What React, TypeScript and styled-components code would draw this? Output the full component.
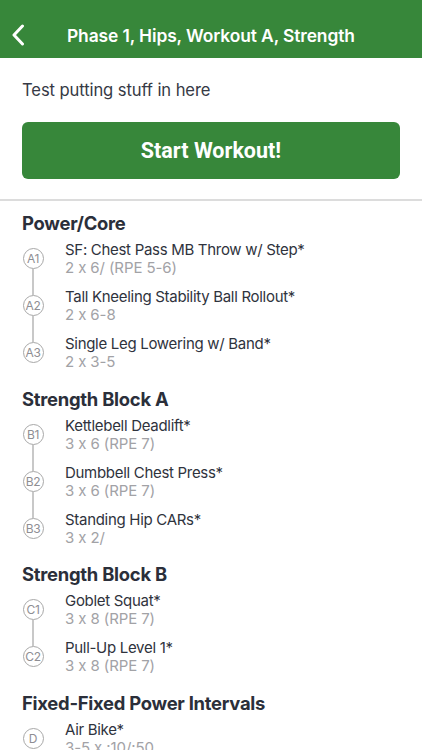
import React from "react";
import styled, { createGlobalStyle } from "styled-components";

const Global = createGlobalStyle`
  html, body { margin: 0; padding: 0; background: #ffffff; }
  body { font-family: Inter, "Noto Sans", sans-serif; -webkit-font-smoothing: antialiased; }
  * { box-sizing: border-box; }
`;

const Page = styled.div`
  width: 422px;
  height: 750px;
  overflow: hidden;
  background: #ffffff;
`;

const Header = styled.header`
  height: 58px;
  background: #37873a;
  display: flex;
  align-items: center;
  padding: 12px 0 0 8px;
  color: #ffffff;
`;

const BackButton = styled.div`
  width: 20px;
  height: 24px;
  display: flex;
  align-items: center;
  justify-content: center;
  margin-right: 39px;
`;

const Title = styled.h1`
  margin: 0;
  font-size: 17.4px;
  font-weight: 600;
  letter-spacing: -0.1px;
  color: #ffffff;
`;

const Intro = styled.p`
  margin: 0;
  padding: 22px 22px 0;
  font-size: 16.6px;
  line-height: 20px;
  color: #363a45;
  letter-spacing: -0.1px;
`;

const StartButton = styled.button`
  display: flex;
  align-items: center;
  justify-content: center;
  margin: 22px 22px 0;
  width: 378px;
  height: 57px;
  border: none;
  border-radius: 6px;
  background: #37873a;
  color: #ffffff;
  font-family: Roboto, "Liberation Sans", sans-serif;
  font-weight: 700;
  font-size: 21.5px;
`;

const Divider = styled.hr`
  margin: 20px 0 0;
  border: none;
  height: 1.5px;
  background: #dcdcdc;
`;

const Section = styled.section`
  padding: 0 22px;
`;

const SectionTitle = styled.h2`
  margin: 10.5px 0 0;
  font-size: 18.4px;
  line-height: 24px;
  font-weight: 700;
  color: #2b2f3a;
  letter-spacing: -0.25px;
`;

const Row = styled.div`
  display: flex;
  height: 47px;
`;

const Rail = styled.div`
  width: 22px;
  display: flex;
  flex-direction: column;
  align-items: center;
  margin-right: 21px;
`;

const Segment = styled.div<{ $show: boolean }>`
  flex: 1;
  width: 1.5px;
  background: ${(p) => (p.$show ? "#c8c8c8" : "transparent")};
`;

const Badge = styled.div`
  width: 21px;
  height: 21px;
  border-radius: 50%;
  border: 1px solid #a8a8a8;
  display: flex;
  align-items: center;
  justify-content: center;
  font-size: 12px;
  color: #8e8e93;
  letter-spacing: -0.4px;
  flex: none;
`;

const Info = styled.div`
  display: flex;
  flex-direction: column;
  justify-content: center;
`;

const Name = styled.div`
  font-size: 15px;
  line-height: 19px;
  color: #2f333d;
  letter-spacing: -0.3px;
`;

const Sets = styled.div`
  font-size: 15px;
  line-height: 18px;
  color: #a2a2a6;
  letter-spacing: -0.1px;
`;

type Item = { code: string; name: string; sets: string };
type Block = { title: string; items: Item[] };

const blocks: Block[] = [
  {
    title: "Power/Core",
    items: [
      { code: "A1", name: "SF: Chest Pass MB Throw w/ Step*", sets: "2 x 6/ (RPE 5-6)" },
      { code: "A2", name: "Tall Kneeling Stability Ball Rollout*", sets: "2 x 6-8" },
      { code: "A3", name: "Single Leg Lowering w/ Band*", sets: "2 x 3-5" },
    ],
  },
  {
    title: "Strength Block A",
    items: [
      { code: "B1", name: "Kettlebell Deadlift*", sets: "3 x 6 (RPE 7)" },
      { code: "B2", name: "Dumbbell Chest Press*", sets: "3 x 6 (RPE 7)" },
      { code: "B3", name: "Standing Hip CARs*", sets: "3 x 2/" },
    ],
  },
  {
    title: "Strength Block B",
    items: [
      { code: "C1", name: "Goblet Squat*", sets: "3 x 8 (RPE 7)" },
      { code: "C2", name: "Pull-Up Level 1*", sets: "3 x 8 (RPE 7)" },
    ],
  },
  {
    title: "Fixed-Fixed Power Intervals",
    items: [{ code: "D", name: "Air Bike*", sets: "3-5 x :10/:50" }],
  },
];

export default function App() {
  return (
    <Page>
      <Global />
      <Header>
        <BackButton>
          <svg width="14" height="22" viewBox="0 0 14 22" fill="none">
            <path d="M11.5 2 L3 11 L11.5 20" stroke="#ffffff" strokeWidth="3" strokeLinecap="round" strokeLinejoin="round" />
          </svg>
        </BackButton>
        <Title>Phase 1, Hips, Workout A, Strength</Title>
      </Header>
      <Intro>Test putting stuff in here</Intro>
      <StartButton>Start Workout!</StartButton>
      <Divider />
      {blocks.map((b) => (
        <Section key={b.title}>
          <SectionTitle>{b.title}</SectionTitle>
          {b.items.map((it, i) => (
            <Row key={it.code}>
              <Rail>
                <Segment $show={i > 0} />
                <Badge>{it.code}</Badge>
                <Segment $show={i < b.items.length - 1} />
              </Rail>
              <Info>
                <Name>{it.name}</Name>
                <Sets>{it.sets}</Sets>
              </Info>
            </Row>
          ))}
        </Section>
      ))}
    </Page>
  );
}
